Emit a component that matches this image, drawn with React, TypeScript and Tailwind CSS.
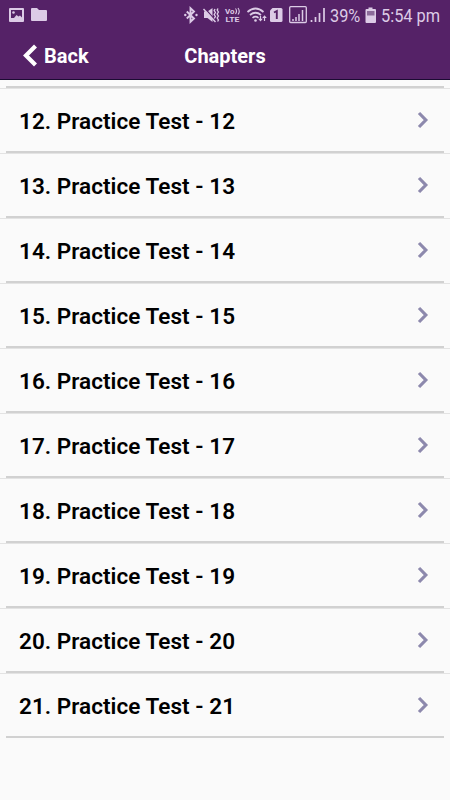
const tests = [12, 13, 14, 15, 16, 17, 18, 19, 20, 21];

function StatusBar() {
  return (
    <div className="flex h-8 items-center text-[#dccbe6]">
      <svg className="h-8 w-[330px] shrink-0" viewBox="0 0 330 32" fill="none">
        {/* picture + folder notifications */}
        <rect x="9" y="8" width="15" height="14" rx="1" fill="currentColor" />
        <path d="M11 10h11v7.500l-2-2-1.500 1-2-1.500-2.500 3-3 0z" fill="#552267" />
        <circle cx="13.500" cy="12.500" r="1.300" fill="currentColor" />
        <path d="M31 9q0-1 1-1h5l2 2h7q1 0 1 1v9q0 1-1 1H32q-1 0-1-1z" fill="currentColor" />
        {/* bluetooth */}
        <path d="M186.800 11.500l7.200 7-3.500 3.300V8.200l3.500 3.300-7.200 7" stroke="currentColor" strokeWidth="1.900" />
        <circle cx="185.300" cy="15" r="1.200" fill="currentColor" />
        <circle cx="196.500" cy="15" r="1.200" fill="currentColor" />
        {/* mute + vibrate */}
        <path d="M204 11.500h3.500l5-3.500v14l-5-4H204z" fill="currentColor" />
        <path d="M204.500 8l11.500 13" stroke="#552267" strokeWidth="1.200" />
        <path d="M203.500 9l12 13" stroke="currentColor" strokeWidth="1.500" />
        <path d="M215 9l-.8 1.500 1.200 2-1.200 2 1.200 2-1.200 2M218 8.500l-.8 1.500 1.200 2-1.200 2 1.200 2-1.200 2 1.200 2-.8 1.500" stroke="currentColor" strokeWidth="1.400" />
        {/* volte */}
        <text x="225" y="13.500" fontSize="7" fontWeight="700" fontFamily="Roboto, sans-serif" fill="currentColor" textLength="9.500" lengthAdjust="spacingAndGlyphs">Vo</text>
        <path d="M235.500 8.500q2 2.500 0 5.500M238 8q2.500 3.500 0 6.500" stroke="currentColor" strokeWidth="1.100" />
        <text x="225.500" y="22.300" fontSize="7.400" fontWeight="700" fontFamily="Roboto, sans-serif" fill="currentColor" textLength="14" lengthAdjust="spacingAndGlyphs">LTE</text>
        {/* wifi */}
        <path d="M247.500 12q8-7 16 0M250 15q5.500-4.500 11 0M252.500 17.800q3-2.500 6 0" stroke="currentColor" strokeWidth="1.700" />
        <circle cx="255.500" cy="20.500" r="1.300" fill="currentColor" />
        <path d="M260.500 16v4M264.500 21v-4" stroke="currentColor" strokeWidth="1.200" />
        <path d="M258.200 18.800h4.600L260.500 21.500zM262.200 18h4.600l-2.300-2.800z" fill="currentColor" />
        {/* sim */}
        <path d="M272.500 8H281q1.500 0 1.500 1.500v11q0 1.500-1.500 1.500h-9.500q-1.500 0-1.500-1.500V10.500z" fill="currentColor" />
        <path d="M274 12.500l2.800-1.500v8" stroke="#552267" strokeWidth="1.900" />
        {/* signal, boxed and plain */}
        <rect x="289.700" y="6.700" width="16.600" height="15.800" rx="1" stroke="currentColor" strokeWidth="1.300" />
        <path d="M293 21v-2M296 21v-4M299 21v-7M302.500 21V10" stroke="currentColor" strokeWidth="1.500" />
        <path d="M311.500 22v-2M315.500 22v-5M319.500 22v-9M324 22V8" stroke="currentColor" strokeWidth="1.700" />
      </svg>
      <span className="w-[35px] shrink-0 origin-left scale-x-[0.86] text-[19px] leading-8 whitespace-nowrap">39%</span>
      <svg className="h-8 w-4 shrink-0" viewBox="0 0 16 32">
        <path d="M3.500 7.500h4v1.500H10q1 0 1 1v12q0 1-1 1H1.500q-1 0-1-1V10q0-1 1-1h2z" fill="currentColor" />
        <path d="M2 11h7.500v4.500H2z" fill="#8c6b9a" />
      </svg>
      <span className="origin-left scale-x-[0.86] text-[19px] leading-8 whitespace-nowrap">5:54 pm</span>
    </div>
  );
}

export default function App() {
  return (
    <div className="h-[800px] w-[450px] overflow-hidden bg-[#fafafa] font-[Roboto,sans-serif]">
      <header className="h-20 border-b border-[#1b0b32] bg-[#552267]">
        <StatusBar />
        <div className="grid h-12 grid-cols-3 items-center text-xl leading-6 font-bold text-white">
          <button className="flex items-center pl-[22px] text-left">
            <svg className="h-6 w-[22px]" viewBox="0 0 22 24" fill="none">
              <path d="M13.500 2L4 11.500l9.500 9.500" stroke="currentColor" strokeWidth="4.200" />
            </svg>
            Back
          </button>
          <h1 className="text-center">Chapters</h1>
        </div>
      </header>
      <div className="mx-1.5 mt-1.5 h-0.5 bg-[#d1d1d1]" />
      <ul>
        {tests.map((n) => (
          <li key={n} className="h-[65px] border-t border-[#e3e3e3]">
            <div className="mx-1.5 flex h-16 items-center justify-between border-b-2 border-[#d1d1d1] pr-[14px] pl-[13px]">
              <span className="pt-px text-[22.5px] leading-7 font-semibold tracking-[0.04px] text-black">{n}. Practice Test - {n}</span>
              <svg className="h-5 w-3.5" viewBox="0 0 14 20" fill="none">
                <path d="M3 3l6.800 7L3 17" stroke="#8d89ad" strokeWidth="3.200" />
              </svg>
            </div>
          </li>
        ))}
      </ul>
    </div>
  );
}
